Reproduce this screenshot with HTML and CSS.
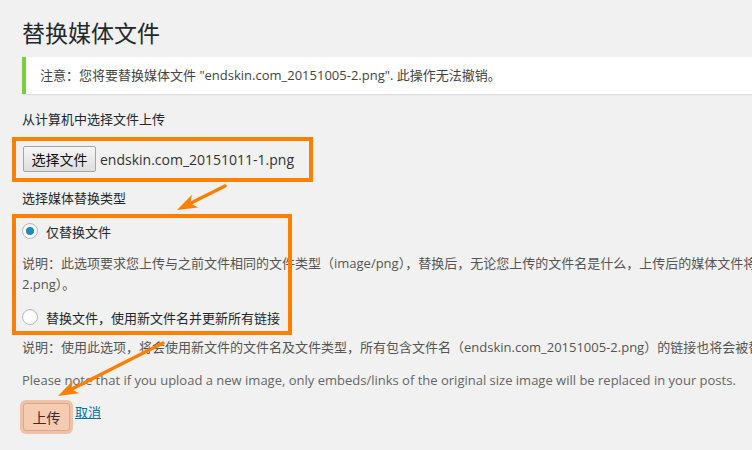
FILE: index.html
```html
<!DOCTYPE html>
<html lang="zh-CN">
<head>
    <meta charset="UTF-8">
    <title>替换媒体文件</title>
    <link rel="stylesheet" href="styles.css">
</head>
<body>

    <div class="wrap">
        <h2 class="page-title">替换媒体文件</h2>

        <div class="notice">
            <p>注意：您将要替换媒体文件 "endskin.com_20151005-2.png". 此操作无法撤销。</p>
        </div>

        <form class="replace-form">
            <p class="field-label">从计算机中选择文件上传</p>

            <!-- file picker -->
            <div class="file-row">
                <span class="file-button">选择文件</span>
                <span class="file-name">endskin.com_20151011-1.png</span>
            </div>

            <p class="field-label">选择媒体替换类型</p>

            <label class="radio-row first">
                <span class="radio checked"></span>
                仅替换文件
            </label>
            <p class="description first">说明：此选项要求您上传与之前文件相同的文件类型（image/png），替换后，无论您上传的文件名是什么，上传后的媒体文件将保持为（endskin.com_20151005-<br>2.png）。</p>

            <label class="radio-row second">
                <span class="radio"></span>
                替换文件，使用新文件名并更新所有链接
            </label>
            <p class="description">说明：使用此选项，将会使用新文件的文件名及文件类型，所有包含文件名（endskin.com_20151005-2.png）的链接也将会被替换为新文件的链接。</p>

            <p class="note">Please note that if you upload a new image, only embeds/links of the original size image will be replaced in your posts.</p>

            <div class="actions">
                <button type="button" class="button-upload">上传</button>
                <a href="#" class="cancel-link">取消</a>
            </div>
        </form>
    </div>

    <!-- annotation marks drawn over the screenshot -->
    <svg class="marks" width="752" height="450" viewBox="0 0 752 450">
        <rect x="14" y="139" width="297" height="41" fill="none" stroke="#ff8000" stroke-width="4"/>
        <rect x="14" y="216" width="276" height="117" fill="none" stroke="#ff8000" stroke-width="4"/>

        <line x1="225" y1="186" x2="190" y2="203.5" stroke="#ff8000" stroke-width="3.5" stroke-linecap="round"/>
        <polygon points="177,210 191.8,194.8 190.4,203.3 198,207.4" fill="#ff8000"/>

        <line x1="163" y1="343" x2="71" y2="389.5" stroke="#ff8000" stroke-width="3.5" stroke-linecap="round"/>
        <polygon points="58,396 72.7,380.7 71.4,389.2 79.1,393.3" fill="#ff8000"/>
    </svg>

</body>
</html>
```

FILE: styles.css
```css
body {
    margin: 0;
    background-color: #f1f1f1;
    font-family: 'Open Sans', 'Noto Sans CJK SC', sans-serif;
    font-size: 13px;
    color: #444;
    overflow: hidden;
    width: 752px;
    height: 450px;
    position: relative;
}

.wrap {
    width: 1200px;
    padding-left: 22px;
}

.page-title {
    font-size: 23px;
    font-weight: 400;
    line-height: 29px;
    color: #23282d;
    margin: 19px 0 9px;
}

.notice {
    background-color: #fff;
    border-left: 4px solid #7ad03a;
    box-shadow: 0 1px 1px rgba(0, 0, 0, 0.08);
    padding: 9px 14px;
}

.notice p {
    margin: 0;
    line-height: 19px;
}

.replace-form {
    margin: 0;
}

.field-label {
    margin: 16px 0 0;
    line-height: 19px;
    color: #23282d;
}

.file-row {
    display: flex;
    align-items: center;
    margin-top: 17px;
    height: 26px;
    font-size: 14px;
}

.file-button {
    display: inline-flex;
    align-items: center;
    justify-content: center;
    box-sizing: border-box;
    width: 73px;
    height: 26px;
    margin-left: 1px;
    border: 1px solid #a6a6a6;
    border-radius: 2px;
    background: linear-gradient(#f6f6f6, #dedede);
    color: #111;
    font-size: 14px;
}

.file-name {
    margin-left: 4px;
    color: #333;
}

.file-row + .field-label {
    margin-top: 17px;
}

.radio-row {
    display: flex;
    align-items: center;
    height: 20px;
    color: #23282d;
}

.radio-row.first {
    margin-top: 13px;
}

.radio-row.second {
    margin-top: 12px;
}

.radio {
    box-sizing: border-box;
    width: 16px;
    height: 16px;
    margin-right: 8px;
    border: 1px solid #b4b9be;
    border-radius: 50%;
    background-color: #fff;
    box-shadow: inset 0 1px 2px rgba(0, 0, 0, 0.07);
    display: flex;
    align-items: center;
    justify-content: center;
}

.radio.checked::after {
    content: '';
    width: 8px;
    height: 8px;
    border-radius: 50%;
    background-color: #1e8cbe;
}

.description {
    margin: 10px 0 0;
    font-size: 13px;
    line-height: 21px;
    color: #555;
    white-space: nowrap;
}

.description.first {
    margin-top: 12px;
}

.note {
    margin: 12px 0 0;
    font-size: 13px;
    line-height: 21px;
    color: #666;
}

.actions {
    display: flex;
    align-items: flex-start;
    margin-top: 12px;
}

.button-upload {
    box-sizing: border-box;
    width: 47px;
    height: 28px;
    margin-left: 1px;
    border: 1px solid #d8a98e;
    border-radius: 3px;
    background-color: #f7cbb2;
    box-shadow: 0 0 0 3px #efc1a7;
    font-family: 'Open Sans', 'Noto Sans CJK SC', sans-serif;
    font-size: 14px;
    color: #3a2a30;
    padding: 0;
}

.cancel-link {
    margin-left: 5px;
    line-height: 19px;
    font-size: 13px;
    color: #0073aa;
}

.marks {
    position: absolute;
    top: 0;
    left: 0;
    pointer-events: none;
}
```
